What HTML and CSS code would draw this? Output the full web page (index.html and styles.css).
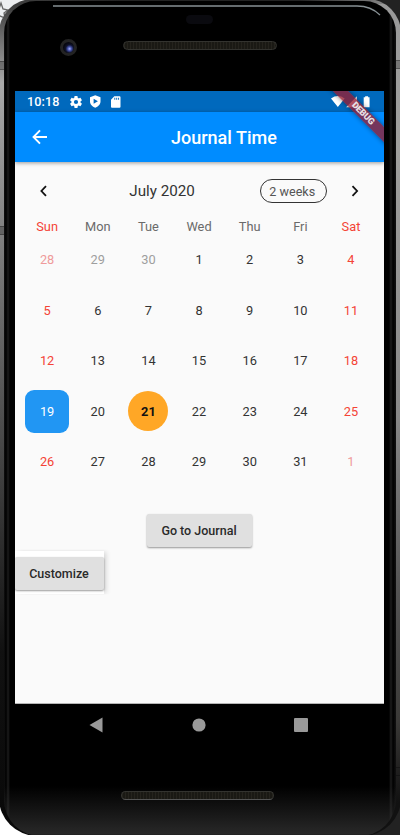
FILE: index.html
```html
<!DOCTYPE html>
<html lang="en">
<head>
<meta charset="utf-8">
<title>Journal Time</title>
<link rel="stylesheet" href="styles.css">
</head>
<body>
<div class="desk">
  <svg class="star" viewBox="0 0 12 24"><path d="M-5 9H0L2 3 4 9 9 10 5 13 6 18 1 16-4 20" fill="none" stroke="#666" stroke-width="1.300"/></svg>
  <div class="phone">
    <i class="seam seam-a"></i><i class="seam seam-b"></i><i class="seam seam-c"></i><i class="seam seam-d"></i>
    <div class="glass">
      <svg class="shine" viewBox="0 0 330 14"><path d="M0 1H304Q318 1 327 10" fill="none" stroke="#879094" stroke-width="1.300"/></svg>
      <header class="top">
        <i class="sensor"></i>
        <i class="camera"></i>
        <i class="speaker"></i>
      </header>
      <main class="screen">
        <div class="status">
          <span class="clock">10:18</span>
          <svg class="gear" viewBox="2 2 20 20"><path fill="#fff" d="M19.43 12.98c.04-.32.07-.64.07-.98s-.03-.66-.07-.98l2.110-1.650c.19-.15.24-.42.12-.64l-2-3.460c-.12-.22-.39-.3-.61-.22l-2.490 1c-.52-.4-1.080-.73-1.690-.98l-.38-2.650C14.460 2.180 14.250 2 14 2h-4c-.25 0-.46.18-.49.42l-.38 2.650c-.61.25-1.170.59-1.690.98l-2.490-1c-.23-.09-.49 0-.61.22l-2 3.460c-.13.22-.07.49.12.64l2.110 1.650c-.04.32-.07.65-.07.98s.03.66.07.98l-2.110 1.650c-.19.15-.24.42-.12.64l2 3.460c.12.22.39.3.61.22l2.490-1c.52.4 1.080.73 1.690.98l.38 2.650c.03.24.24.42.49.42h4c.25 0 .46-.18.49-.42l.38-2.650c.61-.25 1.170-.59 1.690-.98l2.490 1c.23.09.49 0 .61-.22l2-3.460c.12-.22.07-.49-.12-.64zM12 15.500a3.500 3.500 0 1 1 0-7 3.500 3.500 0 0 1 0 7z"/></svg>
          <svg class="shield" viewBox="0 0 11 13"><path fill="#fff" fill-rule="evenodd" d="M5.500 0 11 2v4.500C11 9.500 8.500 12 5.500 13 2.500 12 0 9.500 0 6.500V2zM3.800 3.500v5.400L8.300 6.200z"/></svg>
          <svg class="card" viewBox="0 0 10 12"><path fill="#fff" fill-rule="evenodd" d="M3.500 0H9q1 0 1 1v10q0 1-1 1H1q-1 0-1-1V3.500zM3.500 1.500v2h1v-2zM5.500 1.500v2h1v-2zM7.500 1.500v2h1v-2z"/></svg>
          <svg class="signals" viewBox="0 0 42 14"><path fill="#fff" d="M0 3.300Q7 -1.500 14 3.300L7 12zM15.500 12.500 26.500 1v11.500zM33.500 2.200H35V1h3v1.200h1.500V12.500h-6z"/></svg>
        </div>
        <div class="appbar">
          <svg class="back" viewBox="0 0 16 16"><path d="M15 8H2M8 1.300 1.500 8 8 14.700" fill="none" stroke="#fff" stroke-width="1.900"/></svg>
          <h1>Journal Time</h1>
        </div>
        <div class="ribbon"><span>DEBUG</span></div>
        <section class="calendar">
          <div class="month">
            <svg class="chev" viewBox="0 0 8 12"><path d="M6 1.200 1.400 6l4.600 4.800" fill="none" stroke="#111" stroke-width="1.800"/></svg>
            <h2>July 2020</h2>
            <button class="format">2 weeks</button>
            <svg class="chev" viewBox="0 0 8 12"><path d="M1.500 1.200 6.100 6l-4.600 4.800" fill="none" stroke="#111" stroke-width="1.800"/></svg>
          </div>
          <div class="week names"><b class="red">Sun</b><b>Mon</b><b>Tue</b><b>Wed</b><b>Thu</b><b>Fri</b><b class="red">Sat</b></div>
          <div class="week"><span class="red out">28</span><span class="out">29</span><span class="out">30</span><span>1</span><span>2</span><span>3</span><span class="red">4</span></div>
          <div class="week"><span class="red">5</span><span>6</span><span>7</span><span>8</span><span>9</span><span>10</span><span class="red">11</span></div>
          <div class="week"><span class="red">12</span><span>13</span><span>14</span><span>15</span><span>16</span><span>17</span><span class="red">18</span></div>
          <div class="week"><span class="picked">19</span><span>20</span><span class="today">21</span><span>22</span><span>23</span><span>24</span><span class="red">25</span></div>
          <div class="week"><span class="red">26</span><span>27</span><span>28</span><span>29</span><span>30</span><span>31</span><span class="red out">1</span></div>
        </section>
        <button class="raised go">Go to Journal</button>
        <div class="custom"><button class="raised">Customize</button></div>
      </main>
      <nav class="nav">
        <svg viewBox="0 0 14 16"><path d="M13.500.5v15L.5 8z" fill="#999"/></svg>
        <svg viewBox="0 0 14 16"><circle cx="7" cy="8" r="6.600" fill="#999"/></svg>
        <svg viewBox="0 0 14 16"><rect y="1" width="14" height="14" rx="1" fill="#999"/></svg>
      </nav>
      <i class="speaker low"></i>
    </div>
  </div>
</div>
</body>
</html>
```
FILE: styles.css
```css
* { box-sizing: border-box; }
body { margin: 0; font-family: Roboto, sans-serif; }
i { display: block; }
svg { display: block; overflow: visible; }
button { font: inherit; border: 0; padding: 0; }

.desk {
  position: relative;
  width: 400px;
  height: 835px;
  overflow: hidden;
  background: linear-gradient(90deg, transparent 50%, #222 50%), linear-gradient(#eceef0 30%, #fff 70%);
}
.star { position: absolute; left: -1px; top: 0; width: 12px; height: 24px; overflow: hidden; }
.phone {
  position: relative;
  height: 837px;
  margin: -1px -1px 0 -1px;
  padding: 2px 5px 0 5px;
  border-radius: 34px 34px 38px 38px;
  background:
    linear-gradient(90deg, #444, #222 30%, #222 75%, #999) top / 100% 5px no-repeat,
    linear-gradient(#333 0, #666 4%, #aaa 10%, #777 32%, #444 55%, #111 78%, #080808) left / 50% 100% no-repeat,
    linear-gradient(#999 0, #a0a09e 18%, #888 50%, #555 70%, #3b3a38 86%, #111 96%) right / 50% 100% no-repeat;
}
.seam { position: absolute; width: 5px; height: 9px; background: rgba(30, 30, 30, .3); border: solid rgba(0, 0, 0, .3); border-width: 1px 0; }
.seam-a { left: 0; top: 62px; }
.seam-b { left: 0; top: 227px; }
.seam-c { right: 0; top: 61px; }
.seam-d { right: 0; top: 768px; }

.glass {
  position: relative;
  height: 835px;
  padding: 90px 11px 0 11px;
  border-radius: 32px 32px 36px 36px;
  background:
    linear-gradient(transparent 785px, rgba(50, 50, 50, .8) 833px, #111 835px),
    linear-gradient(90deg, #111 0, #000 2px, #1c1c1c 4px, #000 6px, #000 385px, #1c1c1c 387px, #000 389px, #111 392px);
}
.shine { position: absolute; left: 49px; top: 4px; width: 330px; height: 14px; }
.sensor { position: absolute; left: 182px; top: 14px; width: 27px; height: 9px; border-radius: 5px; background: #0a0a0f; }
.camera { position: absolute; left: 55.500px; top: 38px; width: 17px; height: 17px; border-radius: 50%; border: 3px solid #232323; background: radial-gradient(circle at 60% 62%, #a9b4ff 0, #4350a8 2px, #10132c 4px, #080810 6px); }
.speaker {
  position: absolute; left: 119px; top: 40px; width: 154px; height: 9px; border-radius: 5px;
  border: 1px solid #33332f;
  background: repeating-linear-gradient(90deg, #25231d 0 1px, #1a1914 1px 3px);
}
.speaker.low { left: 117px; top: 790px; width: 153px; border-bottom-color: #555; }

.screen { position: relative; width: 369px; height: 613px; overflow: hidden; background: #fafafa; border-bottom: 1px solid #b5b5b5; display: flex; flex-direction: column; }
.status { height: 21px; flex: none; display: flex; align-items: center; background: #0069bd; color: #fff; padding: 0 12px 0 12px; }
.clock { font-size: 12.600px; font-weight: 500; width: 43px; letter-spacing: .1px; }
.gear { width: 12px; height: 12px; }
.shield { width: 10.500px; height: 13px; margin-left: 8px; }
.card { width: 9.500px; height: 12px; margin-left: 10px; }
.signals { width: 41px; height: 14px; margin-left: auto; }
.appbar { height: 50px; flex: none; display: flex; align-items: center; background: #008cff; box-shadow: 0 1px 4px rgba(0, 0, 0, .4); padding: 1px 0 0 17px; color: #fff; }
.back { width: 16px; height: 16px; margin-top: -1px; }
h1 { margin: 0 0 0 123px; font-size: 18px; font-weight: 500; line-height: 24px; white-space: nowrap; }
.ribbon { position: absolute; right: -37px; top: 16.500px; width: 116px; height: 11px; transform: rotate(45deg); background: rgba(150, 28, 48, .78); box-shadow: 0 0 5px rgba(0, 0, 0, .45); color: #e8e0e4; font-size: 9px; font-weight: 900; line-height: 11px; text-align: center; letter-spacing: -.2px; }

.calendar { padding: 12px 6.500px 0 6.800px; }
.month { height: 34px; display: flex; align-items: center; padding: 0 18px; }
.chev { width: 8px; height: 12px; flex: none; }
h2 { margin: 0 0 0 81.500px; font-size: 15.200px; font-weight: 400; color: #333; width: 130.500px; white-space: nowrap; }
.format { width: 67px; height: 24px; border: 1px solid #333; border-radius: 12px; background: transparent; color: #555; font-size: 12.600px; margin-right: 24px; flex: none; padding-right: 2px; }
.week { display: grid; grid-template-columns: repeat(7, 50.650px); height: 50.600px; align-items: center; justify-items: center; font-size: 12.800px; color: #333; }
.names { height: 26px; padding-top: 11px; color: #6a6a6a; }
.names b { font-weight: 400; }
.names + .week { margin-top: .2px; }
.week .red { color: #f44336; }
.week .out { color: #9e9e9e; }
.week .red.out { color: #ef9a9a; }
.picked, .today { display: flex; align-items: center; justify-content: center; }
.picked { width: 43.500px; height: 43.500px; border-radius: 9px; background: #2196f3; color: #fff; }
.today { width: 40px; height: 40px; border-radius: 50%; background: #ffa726; color: #111; font-weight: 700; }

.raised { height: 33px; border-radius: 2px; background: #e0e0e0; color: #2a2a2a; font-size: 12.500px; font-weight: 500; box-shadow: 0 1px 2px rgba(0, 0, 0, .4); }
.go { width: 105px; margin: 26.800px 0 0 132px; flex: none; padding-right: 1px; }
.custom { width: 89px; height: 43px; margin-top: 4.500px; padding-top: 6px; background: #fff; box-shadow: 3px 0 5px -1px rgba(0, 0, 0, .16); clip-path: inset(-2px -8px 0 0); }
.custom .raised { width: 89px; padding-right: 1px; }

.nav { width: 369px; height: 42px; display: flex; align-items: center; gap: 88.500px; padding-left: 74px; }
.nav svg { width: 14px; height: 16px; flex: none; }
```
